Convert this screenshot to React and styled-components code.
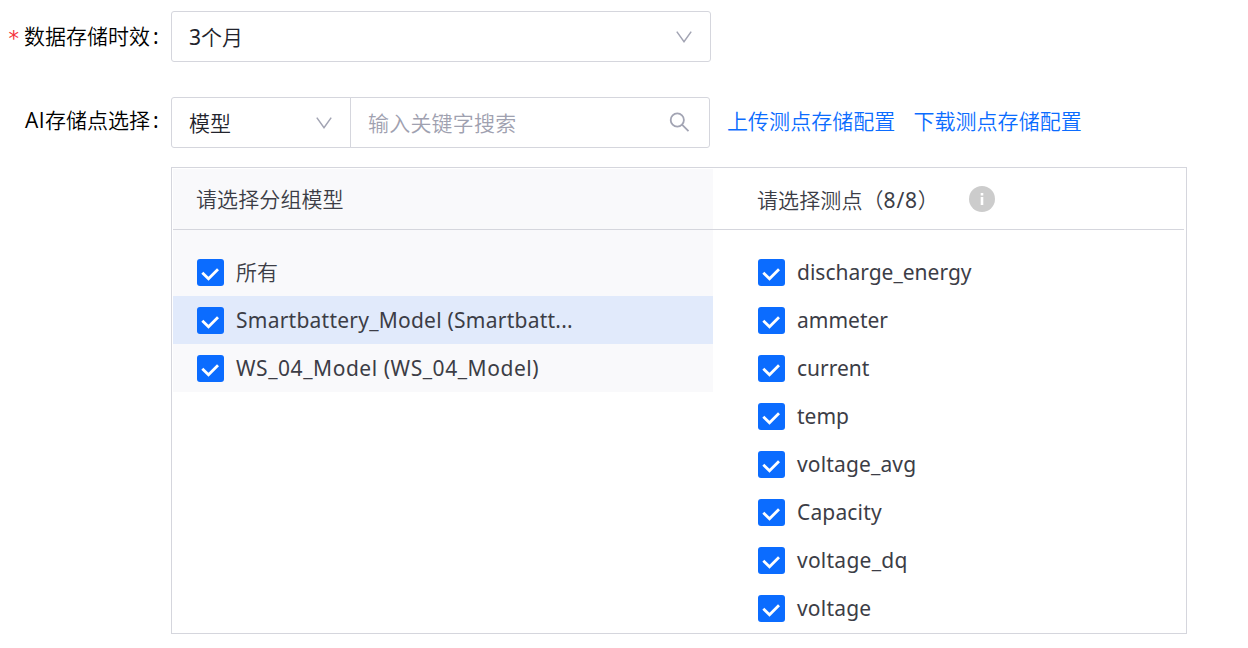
import React from "react";
import styled, { createGlobalStyle } from "styled-components";

const GlobalStyle = createGlobalStyle`
  * { box-sizing: border-box; }
  body {
    margin: 0;
    background: #fff;
    color: #3c3d46;
    font-family: "Noto Sans", "Noto Sans CJK SC", sans-serif;
    font-size: 21px;
    font-weight: 350;
    line-height: 30px;
  }
`;

const Page = styled.main`
  width: 1248px;
  height: 648px;
  padding-top: 11px;
  overflow: hidden;
`;

const FormRow = styled.div`
  display: flex;
  height: 51px;
  margin-bottom: ${(p) => p.$gap}px;
`;

const Label = styled.div`
  display: flex;
  justify-content: flex-end;
  width: 171px;
  padding-top: ${(p) => p.$top}px;
  color: #000;
  white-space: nowrap;
`;

const Required = styled.span`
  margin-right: 5px;
  color: #f5323c;
  font-family: "DejaVu Sans", sans-serif;
  font-weight: 400;
  line-height: 37px;
`;

const Latin = styled.span`
  font-weight: 400;
  letter-spacing: ${(p) => p.$spacing || 0}px;
`;

const Initials = styled.span`
  font-family: "Open Sans", sans-serif;
  font-weight: 400;
  letter-spacing: 0.4px;
`;

const Colon = styled.span`
  width: 21px;
  padding-left: 3px;
  font-weight: 400;
`;

const SelectBox = styled.div`
  display: flex;
  align-items: center;
  justify-content: space-between;
  width: ${(p) => p.$width}px;
  height: 51px;
  padding: 0 18px 0 17px;
  border: 1px solid #d5d6dd;
  border-radius: ${(p) => (p.$joined ? "3px 0 0 3px" : "3px")};
  color: #22232c;
`;

const SearchBox = styled.div`
  display: flex;
  align-items: center;
  justify-content: space-between;
  width: 360px;
  height: 51px;
  margin-left: -1px;
  padding: 0 19px 0 17px;
  border: 1px solid #d5d6dd;
  border-radius: 0 3px 3px 0;
  color: #9fa1b0;
  letter-spacing: 0.2px;
`;

const Links = styled.nav`
  display: flex;
  gap: 18px;
  padding: 9px 0 0 17px;
`;

const Link = styled.a`
  color: #0b6cff;
  letter-spacing: 0.05px;
  white-space: nowrap;
`;

const Panel = styled.section`
  display: grid;
  grid-template-columns: 540px 471px;
  align-items: start;
  width: 1016px;
  height: 467px;
  margin-left: 171px;
  padding: 1px;
  border: 1px solid #d5d6dd;
`;

const Column = styled.div`
  background: ${(p) => (p.$tinted ? "#f9f9fb" : "#fff")};
`;

const ColumnHeader = styled.header`
  display: flex;
  align-items: center;
  height: 61px;
  padding-left: ${(p) => p.$inset}px;
  margin-bottom: 18px;
  border-bottom: 1px solid #d5d6dd;
  letter-spacing: 0.1px;
  white-space: nowrap;
`;

const PointsTitle = styled.span`
  width: 180px;
  padding-top: 2px;
`;

const OptionRow = styled.div`
  display: flex;
  align-items: center;
  gap: 12px;
  height: 48px;
  padding-left: ${(p) => p.$inset}px;
  background: ${(p) => (p.$selected ? "#e1eafb" : "transparent")};
`;

const CheckSquare = styled.span`
  display: flex;
  width: 27px;
  height: 27px;
  margin-top: 1px;
  border-radius: 3px;
  background: #0b6cff;
`;

const OptionText = styled.span`
  font-weight: ${(p) => (p.$light ? 350 : 400)};
  letter-spacing: ${(p) => p.$spacing || 0}px;
  white-space: nowrap;
`;

const InfoIcon = styled.svg`
  margin: 0 0 1px 31.5px;
`;

function Chevron() {
  return (
    <svg width="16" height="14" viewBox="0 0 16 14" fill="none" stroke="#a2a4b3" strokeWidth="1.5">
      <path d="M.8 1.6 8 11.6 15.2 1.6" />
    </svg>
  );
}

function SearchIcon() {
  return (
    <svg width="21" height="21" viewBox="0 0 21 21" fill="none" stroke="#a2a4b3" strokeWidth="1.8">
      <circle cx="8.3" cy="8" r="6.6" />
      <path d="m13 12.7 6.5 6.5" />
    </svg>
  );
}

function Option({ text, inset, selected, light, spacing }) {
  return (
    <OptionRow $inset={inset} $selected={selected}>
      <CheckSquare>
        <svg width="27" height="27" viewBox="0 0 27 27" fill="none" stroke="#fff" strokeWidth="2.8">
          <path d="m5.3 13.7 6.2 6.1L21 10.3" />
        </svg>
      </CheckSquare>
      <OptionText $light={light} $spacing={spacing}>{text}</OptionText>
    </OptionRow>
  );
}

const models = [
  { text: "所有", light: true },
  { text: "Smartbattery_Model (Smartbatt...", selected: true, spacing: 0.24 },
  { text: "WS_04_Model (WS_04_Model)", spacing: 0.55 },
];

const points = [
  { text: "discharge_energy" },
  { text: "ammeter" },
  { text: "current" },
  { text: "temp" },
  { text: "voltage_avg", spacing: 0.15 },
  { text: "Capacity", spacing: 0.15 },
  { text: "voltage_dq", spacing: 0.25 },
  { text: "voltage", spacing: 0.2 },
];

export default function App() {
  return (
    <Page>
      <GlobalStyle />
      <FormRow $gap={35}>
        <Label $top={10}>
          <Required>*</Required>数据存储时效<Colon>:</Colon>
        </Label>
        <SelectBox $width={540}>
          <span><Latin>3</Latin>个月</span>
          <Chevron />
        </SelectBox>
      </FormRow>
      <FormRow $gap={19}>
        <Label $top={8}>
          <Initials>AI</Initials>存储点选择<Colon>:</Colon>
        </Label>
        <SelectBox $width={180} $joined>
          模型
          <Chevron />
        </SelectBox>
        <SearchBox>
          输入关键字搜索
          <SearchIcon />
        </SearchBox>
        <Links>
          <Link>上传测点存储配置</Link>
          <Link>下载测点存储配置</Link>
        </Links>
      </FormRow>
      <Panel>
        <Column $tinted>
          <ColumnHeader $inset={23}>请选择分组模型</ColumnHeader>
          {models.map((m) => (
            <Option key={m.text} inset={24} {...m} />
          ))}
        </Column>
        <Column>
          <ColumnHeader $inset={44}>
            <PointsTitle>请选择测点（<Latin $spacing={0.8}>8/8</Latin>）</PointsTitle>
            <InfoIcon width="26" height="26" viewBox="0 0 26 26">
              <circle cx="13" cy="13" r="13" fill="#ccc" />
              <path d="M11.7 7h2.6v2.5h-2.6zM11.7 11h2.6v8h-2.6z" fill="#fff" />
            </InfoIcon>
          </ColumnHeader>
          {points.map((p) => (
            <Option key={p.text} inset={45} {...p} />
          ))}
        </Column>
      </Panel>
    </Page>
  );
}
